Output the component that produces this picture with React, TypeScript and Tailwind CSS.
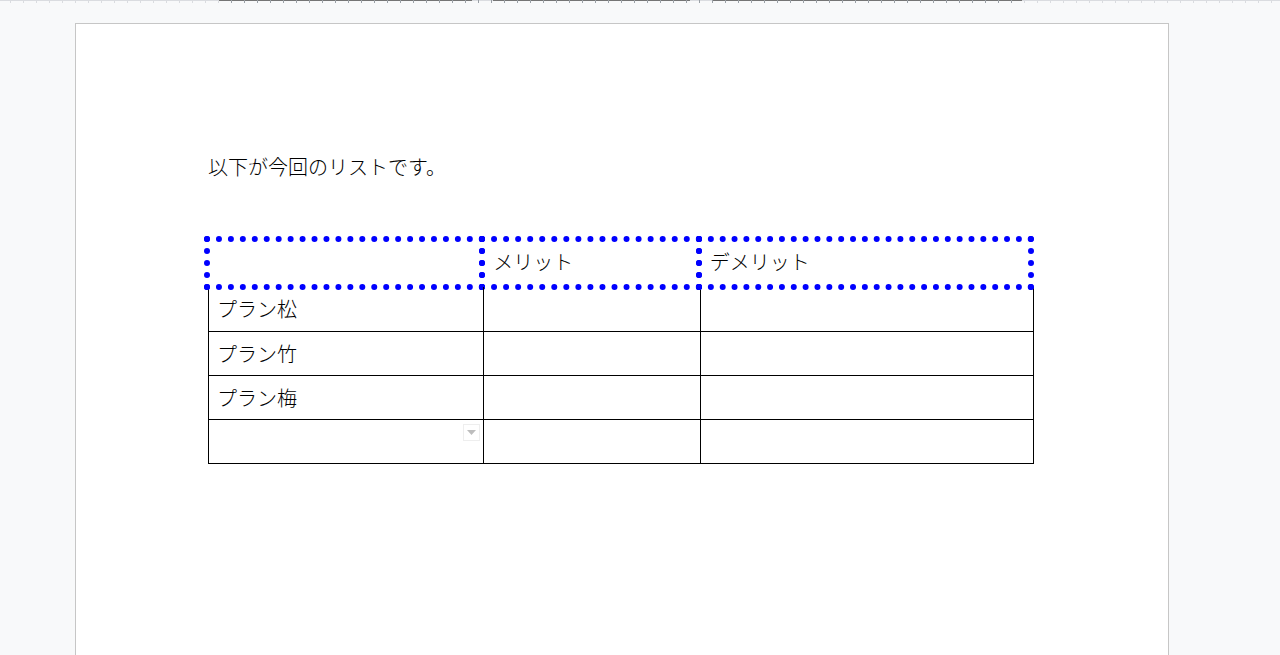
import React from "react";

const ticks = Array.from({ length: 98 }, (_, i) => 10 + i * 13);

function Ruler() {
  return (
    <div className="absolute left-0 top-0 h-[3px] w-full">
      <div className="flex h-px w-full">
        <div className="w-[218px] bg-[#dadce0]" />
        <div className="w-[254px] bg-[#757575]" />
        <div className="w-[21px] bg-[#dadce0]" />
        <div className="w-[197px] bg-[#757575]" />
        <div className="w-[22px] bg-[#dadce0]" />
        <div className="w-[310px] bg-[#757575]" />
        <div className="flex-1 bg-[#dadce0]" />
      </div>
      {ticks.map((x) => (
        <div
          key={x}
          className={`absolute top-0 h-[3px] w-px ${x > 218 && x < 1022 ? "bg-[#9aa0a6]" : "bg-[#dadce0]"}`}
          style={{ left: x }}
        />
      ))}
    </div>
  );
}

function HeaderCell({ w, first, label }: { w: string; first?: boolean; label?: string }) {
  return (
    <div
      className={`${w} ${first ? "" : "-ml-[6px]"} h-[54px] border-[6px] border-dotted border-[#0000ff] flex items-center pl-[8px] pb-[2px] text-[20px]`}
    >
      {label}
    </div>
  );
}

function BodyRow({ label, h, last }: { label?: string; h: string; last?: boolean }) {
  return (
    <div className="flex">
      <div className={`relative w-[275px] ${h} border-r border-b border-black flex items-center pl-[8px] text-[20px]`}>
        {label}
        {last && (
          <div className="absolute right-[3px] top-[4px] w-[17px] h-[17px] border border-[#eeeeee] bg-white flex items-center justify-center">
            <svg width="9" height="6" viewBox="0 0 9 6">
              <path d="M0 0h9L4.5 5z" fill="#bdbdbd" />
            </svg>
          </div>
        )}
      </div>
      <div className={`w-[217px] ${h} border-r border-b border-black`} />
      <div className={`w-[333px] ${h} border-r border-b border-black`} />
    </div>
  );
}

export default function App() {
  return (
    <div
      className="relative w-[1280px] h-[655px] overflow-hidden bg-[#f8f9fa] text-black"
      style={{ fontFamily: '"Noto Sans CJK JP", "Noto Sans", sans-serif' }}
    >
      <Ruler />
      <div className="ml-[75px] mt-[23px] w-[1094px] h-[700px] bg-white border border-[#c6c6c6] pl-[132px] pt-[128px]">
        <p className="text-[20px] leading-[30px] font-light">以下が今回のリストです。</p>
        <div className="mt-[54px] w-[826px] font-light">
          <div className="relative z-0 flex -ml-[4px]">
            <HeaderCell w="w-[282px]" first />
            <HeaderCell w="w-[223px]" label="メリット" />
            <HeaderCell w="w-[339px]" label="デメリット" />
          </div>
          <div className="border-l border-black -mt-[3px]">
            <BodyRow label="プラン松" h="h-[45px]" />
            <BodyRow label="プラン竹" h="h-[44px]" />
            <BodyRow label="プラン梅" h="h-[44px]" />
            <BodyRow h="h-[44px]" last />
          </div>
        </div>
      </div>
    </div>
  );
}
